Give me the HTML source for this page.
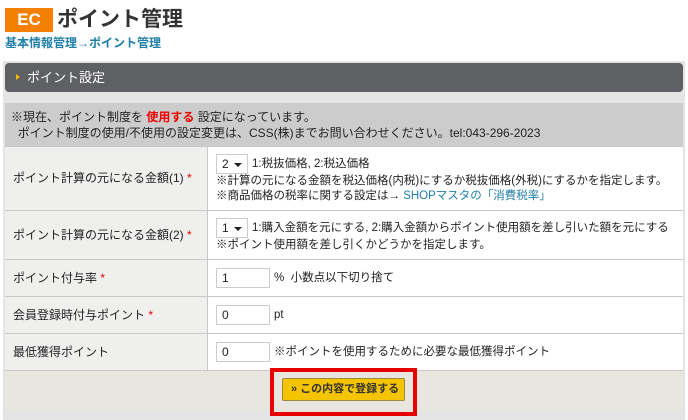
<!DOCTYPE html>
<html><head><meta charset="utf-8"><style>
*{margin:0;padding:0;box-sizing:border-box}
body{width:688px;height:420px;background:#fff;font-family:"Liberation Sans","Noto Sans CJK JP",sans-serif;font-size:12px;color:#222;position:relative;overflow:hidden}
.abs{position:absolute}
.ec{left:5px;top:8px;width:48px;height:24px;background:#f57f00;color:#fff;font-weight:bold;font-size:17px;text-align:center;line-height:24px}
.tt{left:57px;top:6px;font-size:21px;font-weight:bold;color:#333;line-height:28px}
.bc{left:5px;top:35px;font-size:12px;font-weight:bold;color:#1f7fa8;line-height:16px}
.wrap{left:3px;top:61px;width:682px;height:359px;background:#e4e4e4}
.bar{left:5px;top:63px;width:678px;height:29px;background:#5f6064;border-radius:4px;color:#fff;font-size:13px;line-height:29px;padding-left:22px}
.bar:before{content:"";position:absolute;left:11px;top:11px;border-left:4px solid #f5b400;border-top:3px solid transparent;border-bottom:3px solid transparent}
.note{left:5px;top:103px;width:678px;height:43px;background:#cccccc;padding:6px 0 0 6px;line-height:16px;font-size:12px;white-space:nowrap}
.red{color:#e00;font-weight:bold}
.row{position:absolute;left:5px;width:678px;border-bottom:1px solid #c8c8c8;display:flex;white-space:nowrap;font-size:11.5px;line-height:15px}
.l{width:203px;background:#eff0ee;border-right:1px solid #c8c8c8;padding-left:8px;display:flex;align-items:center;font-size:12px}
.v{flex:1;background:#fff;padding-left:8px;display:flex;flex-direction:column;justify-content:center}
.st{color:#e00}
.sel{display:inline-block;width:32px;height:20px;border:1px solid #ccc;vertical-align:middle;padding-left:5px;line-height:18px;position:relative;margin-right:4px;font-size:12px}
.sel:after{content:"";position:absolute;right:5px;top:8px;border-top:4px solid #222;border-left:4px solid transparent;border-right:4px solid transparent}
.in{display:inline-block;width:54px;height:20px;border:1px solid #ccc;vertical-align:middle;padding-left:5px;line-height:18px;margin-right:4px;font-size:12px}
.lk{color:#1f7fa8}
.foot{left:5px;top:371px;width:678px;height:39px;background:#e9e6df}
.box{left:270px;top:368px;width:147px;height:48px;border:4px solid #e60000}
.btn{left:282px;top:378px;width:123px;height:23px;background:#f5c400;border:1px solid #9a8a40;border-radius:2px;font-size:11px;font-weight:bold;color:#333;line-height:21px;padding-left:8px}
</style></head><body>
<div class="abs ec">EC</div>
<div class="abs tt">ポイント管理</div>
<div class="abs bc">基本情報管理→ポイント管理</div>
<div class="abs wrap"></div>
<div class="abs bar">ポイント設定</div>
<div class="abs note">※現在、ポイント制度を <span class="red">使用する</span> 設定になっています。<br>&nbsp;&nbsp;ポイント制度の使用/不使用の設定変更は、CSS(株)までお問い合わせください。tel:043-296-2023</div>
<div class="row" style="top:146px;height:65px;border-top:1px solid #c8c8c8"><div class="l">ポイント計算の元になる金額(1) <span class="st">&nbsp;*</span></div><div class="v"><div><span class="sel">2</span>1:税抜価格, 2:税込価格</div><div>※計算の元になる金額を税込価格(内税)にするか税抜価格(外税)にするかを指定します。</div><div>※商品価格の税率に関する設定は→ <span class="lk">SHOPマスタの「消費税率」</span></div></div></div>
<div class="row" style="top:211px;height:49px"><div class="l">ポイント計算の元になる金額(2) <span class="st">&nbsp;*</span></div><div class="v"><div><span class="sel">1</span>1:購入金額を元にする, 2:購入金額からポイント使用額を差し引いた額を元にする</div><div>※ポイント使用額を差し引くかどうかを指定します。</div></div></div>
<div class="row" style="top:260px;height:37px"><div class="l">ポイント付与率 <span class="st">&nbsp;*</span></div><div class="v"><div><span class="in">1</span>%&nbsp; 小数点以下切り捨て</div></div></div>
<div class="row" style="top:297px;height:37px"><div class="l">会員登録時付与ポイント <span class="st">&nbsp;*</span></div><div class="v"><div><span class="in">0</span>pt</div></div></div>
<div class="row" style="top:334px;height:37px"><div class="l">最低獲得ポイント</div><div class="v"><div><span class="in">0</span>※ポイントを使用するために必要な最低獲得ポイント</div></div></div>
<div class="abs foot"></div>
<div class="abs btn">» この内容で登録する</div>
<div class="abs box"></div>
</body></html>
